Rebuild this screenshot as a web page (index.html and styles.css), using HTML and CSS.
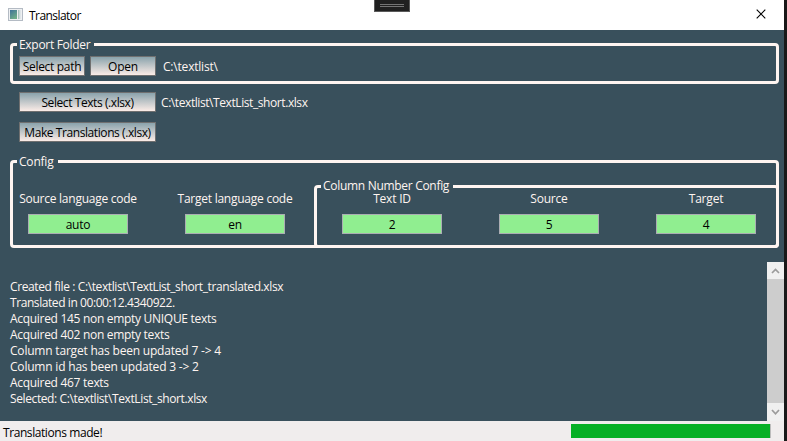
FILE: index.html
```html
<!DOCTYPE html>
<html lang="en">
<head>
<meta charset="utf-8">
<title>Translator</title>
<link rel="stylesheet" href="styles.css">
</head>
<body>
<div class="window">
  <header class="titlebar">
    <svg class="app-icon" width="15" height="13" viewBox="0 0 15 13">
      <defs><linearGradient id="pane" x1="0" y1="0" x2="0.6" y2="1"><stop offset="0" stop-color="#3f7399"/><stop offset="1" stop-color="#6fae88"/></linearGradient></defs>
      <rect x="0.5" y="0.5" width="14" height="12" fill="#eef0f2" stroke="#b4bbc4"/>
      <rect x="2" y="2" width="7" height="9" fill="url(#pane)"/>
      <rect x="10" y="2" width="1.5" height="9" fill="#a9c4bd"/>
      <rect x="12" y="2" width="1" height="9" fill="#dfe5e8"/>
    </svg>
    <span class="title">Translator</span>
    <svg class="close" width="10" height="10" viewBox="0 0 10 10"><path d="M.7.7 9.3 9.3M9.3.7.7 9.3" stroke="#000" stroke-width="1.1"/></svg>
    <div class="handle"><i></i><i></i></div>
  </header>
  <main class="content">
    <fieldset class="group export">
      <legend class="snug">Export Folder</legend>
      <div class="row">
        <button class="btn small snug">Select path</button>
        <button class="btn small">Open</button>
        <span class="folder">C:\textlist\</span>
      </div>
    </fieldset>
    <div class="actions">
      <div class="row"><button class="btn wide tight">Select Texts (.xlsx)</button><span class="file tight">C:\textlist\TextList_short.xlsx</span></div>
      <div class="row"><button class="btn wide tight">Make Translations (.xlsx)</button></div>
    </div>
    <fieldset class="group config">
      <legend>Config</legend>
      <div class="config-body">
        <div class="fields languages">
          <label class="field"><span class="code">Source language code</span><b>auto</b></label>
          <label class="field"><span class="code">Target language code</span><b>en</b></label>
        </div>
        <fieldset class="group columns">
          <legend class="snug">Column Number Config</legend>
          <div class="fields">
            <label class="field"><span>Text ID</span><b>2</b></label>
            <label class="field"><span>Source</span><b>5</b></label>
            <label class="field"><span>Target</span><b>4</b></label>
          </div>
        </fieldset>
      </div>
    </fieldset>
  </main>
  <section class="log">
    <div class="lines">
      <p class="path">Created file : C:\textlist\TextList_short_translated.xlsx</p>
      <p class="tight">Translated in 00:00:12.4340922.</p>
      <p class="snug">Acquired 145 non empty UNIQUE texts</p>
      <p class="snug">Acquired 402 non empty texts</p>
      <p>Column target has been updated 7 -&gt; 4</p>
      <p>Column id has been updated 3 -&gt; 2</p>
      <p class="snug">Acquired 467 texts</p>
      <p class="path">Selected: C:\textlist\TextList_short.xlsx</p>
    </div>
    <div class="scrollbar">
      <svg width="17" height="17" viewBox="0 0 17 17"><path d="M5 11l3.5-3.5L12 11" fill="none" stroke="#9b9b9b" stroke-width="1.7"/></svg>
      <div class="thumb"></div>
      <svg width="17" height="18" viewBox="0 0 17 18"><path d="M5 7l3.5 3.8L12 7" fill="none" stroke="#9b9b9b" stroke-width="1.7"/></svg>
    </div>
  </section>
  <footer class="status">
    <span class="tight message">Translations made!</span>
    <div class="progress"></div>
  </footer>
</div>
</body>
</html>
```
FILE: styles.css
```css
* { box-sizing: border-box; }
body { margin: 0; width: 787px; height: 441px; overflow: hidden; background: #191919; font: 12px/16px "Open Sans", "Noto Sans", sans-serif; letter-spacing: -0.2px; color: #fff5f1; }
.window { width: 784px; height: 441px; display: flex; flex-direction: column; background: #39505c; white-space: nowrap; }
.titlebar { position: relative; flex: none; height: 30px; display: flex; align-items: center; padding: 0 18px 0 8px; background: #fff; color: #000; }
.app-icon { margin-top: -2px; }
.title { margin: 2px 0 0 6px; letter-spacing: -0.55px; }
.close { margin-left: auto; margin-top: -2px; }
.handle { position: absolute; left: 374px; top: 0; width: 36px; height: 12px; padding: 4px 5px 0; background: #202020; border: 1px solid #5a5a5a; border-top: 0; }
.handle i { display: block; height: 1px; margin-bottom: 1px; background: #747474; }
.content { flex: none; height: 232px; padding: 6px 5px 0 10px; }
.group { margin: 0; padding: 0; min-width: 0; border: 3px solid #fff5f1; border-radius: 4px; }
.group > legend { margin-left: 4px; padding: 0 4px 0 2px; height: 17px; line-height: 17px; }
.export { height: 48px; }
.row { display: flex; align-items: center; height: 20px; }
.export .row { margin: 3px 0 0 6px; }
.btn { flex: none; height: 20px; padding: 1px 0 0; border: 1px solid #707070; border-radius: 0; background: linear-gradient(#8aa3ac, #fbece7); font: inherit; line-height: 17px; letter-spacing: -0.2px; color: #000; text-align: center; }
.small { width: 66px; margin-right: 5px; }
.folder { margin-left: 2px; padding-top: 2px; }
.wide { width: 137px; margin-right: 5px; }
.file { padding-top: 2px; }
.snug { letter-spacing: -0.3px; }
.tight { letter-spacing: -0.42px; }
.path { letter-spacing: -0.39px; }
.code { letter-spacing: -0.25px; }
.actions { display: grid; gap: 10px; margin: 8px 0 0 9px; }
.config { height: 95px; margin-top: 11px; }
.config-body { display: flex; }
.languages { flex: none; width: 301px; padding: 21px 0 0 15px; }
.fields { display: flex; gap: 57px; }
.field { width: 100px; display: flex; flex-direction: column; align-items: center; }
.field b { width: 100px; height: 20px; margin-top: 7px; border: 1px solid #abadb3; background: #90ee90; color: #000; font-weight: 400; line-height: 19px; text-align: center; }
.columns { flex: 1; height: 70px; margin: 8px -3px -3px 0; }
.group.columns > legend { line-height: 15px; }
.columns .fields { margin: -4px 0 0 25px; }
.log { flex: none; height: 159px; display: flex; justify-content: space-between; }
.lines { padding: 17px 0 0 10px; }
.lines p { margin: 0; }
.scrollbar { width: 17px; background: #f0f0f0; display: flex; flex-direction: column; }
.scrollbar svg { flex: none; }
.thumb { flex: 1; background: #cdcdcd; }
.status { flex: none; height: 20px; display: flex; justify-content: space-between; padding: 3px 13px 0 3px; background: #f0eded; color: #000; }
.message { padding-top: 1px; }
.progress { width: 200px; height: 14px; background: #06b025; border-right: 1px solid #bcbcbc; }
```
